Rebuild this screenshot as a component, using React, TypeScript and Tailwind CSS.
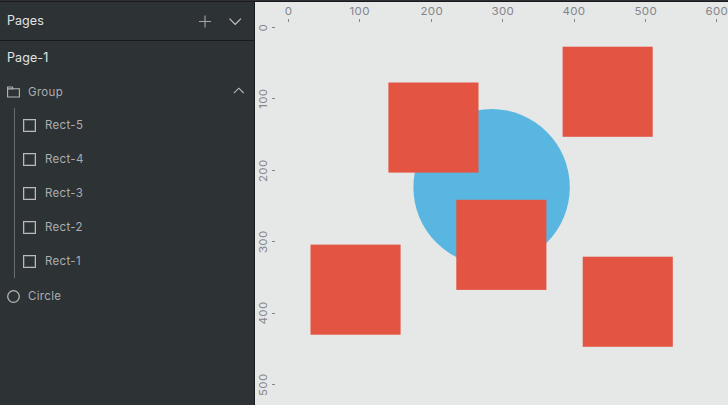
import React from "react";

const columns = [0, 100, 200, 300, 400, 500, 600];
const rows = [0, 100, 200, 300, 400, 500];
const layers = ["Rect-5", "Rect-4", "Rect-3", "Rect-2", "Rect-1"];
const squares = [
  [388.4, 82.5],
  [562.6, 46.7],
  [456.3, 199.8],
  [310.5, 244.6],
  [582.7, 256.7],
];

function Sidebar() {
  return (
    <aside className="flex w-[255px] shrink-0 flex-col border-r border-[#1b1a1e] bg-[#2d3235] text-[11.5px] tracking-[0.32px] text-[#abadaf]">
      <header className="flex h-[39px] shrink-0 items-center border-b border-[#18191c] pl-[7px] text-[12.5px] text-[#e2e3e4]">
        <span className="flex-1 tracking-[0.05px]">Pages</span>
        <svg className="mr-[17px] h-[13px] w-[14px]" viewBox="0 0 14 13" fill="none" stroke="#a4a6a8" strokeWidth="1.1">
          <path d="M7 .5v12M1 6.5h12" />
        </svg>
        <svg className="mr-[12px] h-[13px] w-[13px]" viewBox="0 0 13 13" fill="none" stroke="#c4c6c7" strokeWidth="1.2">
          <path d="M.5 3.7 6.2 9.4l5.7-5.7" />
        </svg>
      </header>
      <div className="flex h-[34px] items-center pl-[7px] text-[12.5px] tracking-[0.1px] text-[#e2e3e4]">Page-1</div>
      <div className="flex h-[33px] items-center pl-[7px]">
        <svg className="mr-[8px] h-[12px] w-[13px]" viewBox="0 0 13 12" fill="none" stroke="#b4b6b8" strokeWidth="1.1">
          <path d="M.6 11V1h4.7l1 1.8h6.1V11H.6ZM.6 2.9h6" />
        </svg>
        <span className="flex-1 pt-[2px]">Group</span>
        <svg className="mr-[10px] h-[11px] w-[11px]" viewBox="0 0 11 11" fill="none" stroke="#b9bbbd" strokeWidth="1.1">
          <path d="m.9 7.1 4.9-4.9 4.9 4.9" />
        </svg>
      </div>
      <div className="ml-[14px] border-l border-[#696d70]">
        {layers.map((name) => (
          <div key={name} className="flex h-[34px] items-center pl-[8px]">
            <span className="mr-[9px] h-[13px] w-[13px] border border-[#b9bbbd] shadow-[inset_0_0_0_1px_#54585b]" />
            <span className="pt-[2px]">{name}</span>
          </div>
        ))}
      </div>
      <div className="flex h-[36px] items-center pl-[7px]">
        <svg className="mr-[8px] h-[13px] w-[13px]" viewBox="0 0 13 13" fill="none" stroke="#b4b6b8" strokeWidth="1.3">
          <circle cx="6.5" cy="6.5" r="5.8" />
        </svg>
        <span className="pt-[2px]">Circle</span>
      </div>
    </aside>
  );
}

function Canvas() {
  return (
    <main className="flex min-w-0 flex-1 flex-col overflow-hidden bg-[#e5e8e7] text-[11px] text-[#85868c]">
      <div className="-ml-[2.2px] flex h-[20px] shrink-0">
        {columns.map((n) => (
          <div key={n} className="flex w-[71.4px] shrink-0 flex-col items-center">
            <span className="h-[17px] scale-x-105 leading-[18px] tracking-[0.3px]">{n}</span>
            <span className="h-[3px] w-px bg-[#85868c]" />
          </div>
        ))}
      </div>
      <div className="flex min-h-0 flex-1">
        <div className="-mt-[30.2px] flex w-[20px] shrink-0 flex-col">
          {rows.map((n) => (
            <div key={n} className="flex h-[71.4px] shrink-0 items-center">
              <span className="flex w-[17px] justify-center pr-[1px]">
                <span className="rotate-180 scale-y-105 leading-[14px] tracking-[0.3px] [writing-mode:vertical-rl]">{n}</span>
              </span>
              <span className="h-px w-[3px] bg-[#85868c]" />
            </div>
          ))}
        </div>
        <svg className="h-[383px] w-[453px] shrink-0" viewBox="275 22 453 383">
          <circle cx="491.6" cy="187.3" r="78.2" fill="#59b6e0" />
          {squares.map(([x, y]) => (
            <rect key={x} x={x} y={y} width="90.1" height="90.1" fill="#e45442" />
          ))}
        </svg>
      </div>
    </main>
  );
}

export default function App() {
  return (
    <div className="flex h-[405px] w-[728px] flex-col overflow-hidden font-['Inter','Liberation_Sans',sans-serif]">
      <div className="h-[2px] shrink-0 border-b border-[#1a191d] bg-[#2f3034]" />
      <div className="flex min-h-0 flex-1">
        <Sidebar />
        <Canvas />
      </div>
    </div>
  );
}
